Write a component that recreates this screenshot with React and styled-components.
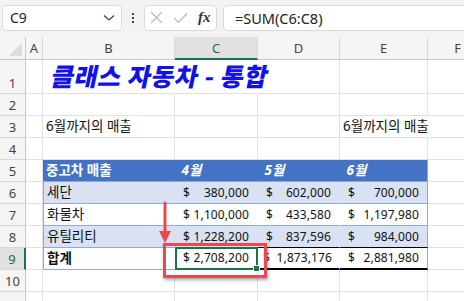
import styled, { createGlobalStyle } from "styled-components"

const Global = createGlobalStyle`
  html, body { margin: 0; padding: 0; background: #fff; overflow: hidden; }
  body { font-family: "Noto Sans", "Noto Sans CJK KR", sans-serif; }
`

const Page = styled.div`
  width: 464px;
  height: 301px;
  position: relative;
  overflow: hidden;
  background: #fff;
`

const Toolbar = styled.div`
  height: 37px;
  box-sizing: border-box;
  background: #f3f3f3;
  display: flex;
  align-items: center;
  padding: 0 0 2px 2px;
`

const Box = styled.div`
  height: 26px;
  box-sizing: border-box;
  background: #fff;
  border: 1px solid #dadada;
  border-radius: 4px;
  display: flex;
  align-items: center;
  width: ${p => p.w}px;
  flex: ${p => (p.grow ? 1 : "none")};
  margin-right: ${p => (p.grow ? "-10px" : "0")};
`

const NameText = styled.span`
  flex: 1;
  padding-left: 7px;
  font-size: 14px;
  color: #222;
  font-family: "Noto Sans", sans-serif;
`

const Dots = styled.div`
  width: 22px;
  display: flex;
  flex-direction: column;
  align-items: center;
  gap: 2px;
  & span { width: 2px; height: 2px; background: #444; display: block; }
`

const Gap = styled.div`
  width: 6px;
`

const FormulaText = styled.span`
  padding-left: 11px;
  font-size: 14.5px;
  color: #222;
  font-family: "Noto Sans", sans-serif;
`

const IconBtn = styled.div`
  width: 24px;
  display: flex;
  justify-content: center;
  align-items: center;
`

const Fx = styled.span`
  font-family: "Liberation Serif", serif;
  font-style: italic;
  font-weight: bold;
  font-size: 15px;
  color: #333;
`

const Sheet = styled.div`
  display: grid;
  grid-template-columns: 26px 17px 132px 83px 82px 88px 60px;
  grid-template-rows: 23px 34px repeat(10, 22px);
  font-family: "Noto Sans", "Noto Sans CJK KR", sans-serif;
  font-size: 13.5px;
  color: #111;
`

const ColHead = styled.div`
  background: ${p => (p.sel ? "#e1e1e1" : "#f5f5f5")};
  color: ${p => (p.sel ? "#1e6e42" : "#444")};
  border-right: 1px solid #d8d8d8;
  border-bottom: ${p => (p.sel ? "2px solid #1e7145" : "1px solid #c8c8c8")};
  box-sizing: border-box;
  display: flex;
  align-items: center;
  justify-content: center;
  font-size: 13px;
  font-family: "Noto Sans", sans-serif;
`

const Corner = styled.div`
  background: #f5f5f5;
  border-right: 1px solid #c8c8c8;
  border-bottom: 1px solid #c8c8c8;
  box-sizing: border-box;
  position: relative;
  &::after {
    content: "";
    position: absolute;
    right: 3px;
    bottom: 3px;
    border-style: solid;
    border-width: 0 0 13px 13px;
    border-color: transparent transparent #dcdcdc transparent;
  }
`

const RowHead = styled.div`
  background: ${p => (p.sel ? "#e1e1e1" : "#f5f5f5")};
  color: ${p => (p.sel ? "#1e6e42" : "#444")};
  border-right: ${p => (p.sel ? "2px solid #1e7145" : "1px solid #c8c8c8")};
  border-bottom: 1px solid #d8d8d8;
  box-sizing: border-box;
  display: flex;
  align-items: flex-end;
  justify-content: center;
  padding-bottom: 1px;
  font-size: 13px;
  font-family: "Noto Sans", sans-serif;
`

const Cell = styled.div`
  box-sizing: border-box;
  border-right: 1px solid ${p => p.rc || "#e1e1e1"};
  border-bottom: ${p => p.bb || "1px solid #e1e1e1"};
  border-top: ${p => p.bt || "none"};
  border-left: ${p => (p.lc ? `1px solid ${p.lc}` : "none")};
  background: ${p => p.bg || "#fff"};
  color: ${p => p.color || "#111"};
  font-weight: ${p => (p.bold ? "bold" : "normal")};
  font-style: ${p => (p.italic ? "italic" : "normal")};
  display: flex;
  align-items: flex-end;
  padding: 0 3px 2px 3px;
  white-space: nowrap;
  position: relative;
  z-index: ${p => (p.z ? 1 : 0)};
  margin-top: ${p => (p.bt ? "-1px" : "0")};
`

const Title = styled.span`
  font-family: "Noto Sans CJK KR", sans-serif;
  font-weight: 900;
  font-size: 25px;
  color: #1212e8;
  transform: skewX(-12deg);
  display: inline-block;
  margin-left: 6px;
  margin-bottom: -2px;
  letter-spacing: 0.5px;
`

const Money = styled.div`
  flex: 1;
  display: flex;
  justify-content: space-between;
  padding: 0 ${p => (p.tight ? 4 : 5)}px 0 ${p => (p.tight ? 2 : 5)}px;
  font-size: 12px;
  letter-spacing: 0.1px;
`

const Overlay = styled.div`
  position: absolute;
  pointer-events: none;
`

const Selection = styled(Overlay)`
  left: 175px;
  top: 247px;
  width: 83px;
  height: 23px;
  box-sizing: border-box;
  border: 2px solid #1e7145;
  &::after {
    content: "";
    position: absolute;
    right: -4px;
    bottom: -4px;
    width: 5px;
    height: 5px;
    background: #1e7145;
    border: 1px solid #fff;
  }
`

const RedBox = styled(Overlay)`
  left: 163px;
  top: 243px;
  width: 104px;
  height: 35px;
  box-sizing: border-box;
  border: 3px solid #ea4a4f;
  box-shadow: 1px 2px 3px rgba(0, 0, 0, 0.35);
`

const Arrow = styled(Overlay)`
  left: 158px;
  top: 201px;
`

const blueHead = "#4472c4"
const band = "#d9e1f2"
const line = "#8ea9db"

const rows = [
  ["세단", "380,000", "602,000", "700,000"],
  ["화물차", "1,100,000", "433,580", "1,197,980"],
  ["유틸리티", "1,228,200", "837,596", "984,000"],
]

const Blank = ({ n = 1 }) =>
  Array.from({ length: n }).map((_, i) => <Cell key={i} />)

const App = () => {
  return (
    <Page>
      <Global />
      <Toolbar>
        <Box w={120}>
          <NameText>C9</NameText>
          <svg width="12" height="8" viewBox="0 0 12 8" style={{ marginRight: 6 }}>
            <path d="M1 1.5 L6 6 L11 1.5" fill="none" stroke="#444" strokeWidth="1.3" />
          </svg>
        </Box>
        <Dots>
          <span />
          <span />
          <span />
        </Dots>
        <Box w={73}>
          <IconBtn>
            <svg width="13" height="13" viewBox="0 0 13 13">
              <path d="M1 1 L12 12 M12 1 L1 12" stroke="#b8b8b8" strokeWidth="1.2" />
            </svg>
          </IconBtn>
          <IconBtn>
            <svg width="15" height="12" viewBox="0 0 15 12">
              <path d="M1 6 L5.5 10.5 L14 1.5" fill="none" stroke="#b8b8b8" strokeWidth="1.2" />
            </svg>
          </IconBtn>
          <IconBtn>
            <Fx>fx</Fx>
          </IconBtn>
        </Box>
        <Gap />
        <Box grow>
          <FormulaText>=SUM(C6:C8)</FormulaText>
        </Box>
      </Toolbar>

      <Sheet>
        <Corner />
        <ColHead>A</ColHead>
        <ColHead>B</ColHead>
        <ColHead sel>C</ColHead>
        <ColHead>D</ColHead>
        <ColHead>E</ColHead>
        <ColHead>F</ColHead>

        <RowHead>1</RowHead>
        <Cell />
        <Cell rc="transparent" z>
          <Title>클래스 자동차 - 통합</Title>
        </Cell>
        <Cell rc="transparent" />
        <Cell />
        <Blank n={2} />

        <RowHead>2</RowHead>
        <Blank n={6} />

        <RowHead>3</RowHead>
        <Cell />
        <Cell>6월까지의 매출</Cell>
        <Cell />
        <Cell />
        <Cell rc="transparent" z>6월까지의 매출</Cell>
        <Cell />

        <RowHead>4</RowHead>
        <Blank n={6} />

        <RowHead>5</RowHead>
        <Cell />
        <Cell bg={blueHead} color="#fff" rc={blueHead} bb={`1px solid ${line}`} bold>
          중고차 매출
        </Cell>
        <Cell bg={blueHead} color="#fff" rc={blueHead} bb={`1px solid ${line}`} bold italic>
          &nbsp;4월
        </Cell>
        <Cell bg={blueHead} color="#fff" rc={blueHead} bb={`1px solid ${line}`} bold italic>
          &nbsp;5월
        </Cell>
        <Cell bg={blueHead} color="#fff" rc={line} bb={`1px solid ${line}`} bold italic>
          &nbsp;6월
        </Cell>
        <Cell />

        {rows.map((r, i) => {
          const bg = i % 2 === 0 ? band : "#fff"
          return [
            <RowHead key={"h" + i}>{6 + i}</RowHead>,
            <Cell key={"a" + i} />,
            <Cell key={"b" + i} bg={bg} rc={bg} lc={line} bb={`1px solid ${line}`}>
              {r[0]}
            </Cell>,
            ...r.slice(1).map((v, j) => (
              <Cell key={"v" + i + j} bg={bg} rc={j === 2 ? line : bg} bb={`1px solid ${line}`}>
                <Money>
                  <span>$</span>
                  <span>{v}</span>
                </Money>
              </Cell>
            )),
            <Cell key={"f" + i} />,
          ]
        })}

        <RowHead sel>9</RowHead>
        <Cell />
        <Cell bb={`1px solid ${line}`} lc={line} bold rc="#fff">
          합계
        </Cell>
        <Cell bb="2px solid #000" rc="#fff">
          <Money>
            <span>$</span>
            <span>2,708,200</span>
          </Money>
        </Cell>
        <Cell bt="1px solid #000" bb="2px solid #000" rc="#fff">
          <Money tight>
            <span>$</span>
            <span>1,873,176</span>
          </Money>
        </Cell>
        <Cell bt="1px solid #000" bb="2px solid #000" rc={line}>
          <Money>
            <span>$</span>
            <span>2,881,980</span>
          </Money>
        </Cell>
        <Cell />

        <RowHead>10</RowHead>
        <Blank n={6} />

        <RowHead />
        <Blank n={6} />
      </Sheet>

      <Arrow>
        <svg width="14" height="44" viewBox="0 0 14 44">
          <path d="M7 2 L7 32" stroke="#ea4a4f" strokeWidth="3" strokeLinecap="round" />
          <path d="M1 30 L7 42 L13 30 Z" fill="#ea4a4f" />
        </svg>
      </Arrow>
      <RedBox />
      <Selection />
    </Page>
  )
}

export default App
